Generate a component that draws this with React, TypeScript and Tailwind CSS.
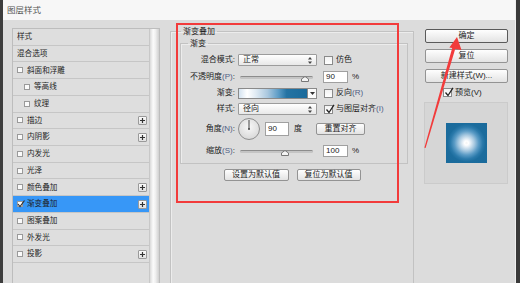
import React from "react";

const FONT = "font-['Liberation_Sans','Noto_Sans_CJK_SC',sans-serif]";

function Key({ k }: { k: string }) {
  return <span className="text-[#4f5f86]">{k}</span>;
}

function UpDown() {
  return (
    <svg width="4" height="7" viewBox="0 0 4 7">
      <polygon points="2,0 4,2.6 0,2.6" fill="#444" />
      <polygon points="0,4.4 4,4.4 2,7" fill="#444" />
    </svg>
  );
}

function SmallCheck({ checked = false }: { checked?: boolean }) {
  return (
    <div className="relative w-[6px] h-[6px] border border-[#9a9a9a] bg-[#fbfbfb] shrink-0">
      {checked && (
        <svg className="absolute left-[-1px] top-[-2px]" width="8" height="8" viewBox="0 0 8 8">
          <path d="M1 4 L3 6.5 L7.5 0.5" fill="none" stroke="#333" strokeWidth="1.2" />
        </svg>
      )}
    </div>
  );
}

function Check({ checked = false }: { checked?: boolean }) {
  return (
    <div className="relative w-[9px] h-[9px] border border-[#8a8a8a] bg-[linear-gradient(#f2f2f2,#ffffff)] shrink-0">
      {checked && (
        <svg className="absolute left-[0px] top-[-2px]" width="10" height="10" viewBox="0 0 10 10">
          <path d="M1.5 5.5 L4 8.5 L9 0.8" fill="none" stroke="#222" strokeWidth="1.3" />
        </svg>
      )}
    </div>
  );
}

function Plus() {
  return (
    <div className="w-[9px] h-[9px] border border-[#9a9a9a] rounded-[1px] bg-[linear-gradient(#fafafa,#e2e2e2)] flex items-center justify-center shrink-0">
      <svg width="7" height="7" viewBox="0 0 7 7">
        <path d="M3.5 1 V6 M1 3.5 H6" stroke="#333" strokeWidth="1.2" />
      </svg>
    </div>
  );
}

function Btn({ w, h = 12, children, dark = false }: { w: number; h?: number; children: React.ReactNode; dark?: boolean }) {
  return (
    <div
      style={{ width: w, height: h }}
      className={`flex items-center justify-center rounded-[2px] bg-[linear-gradient(#fefefe,#e3e3e3)] leading-none text-[8px] text-[#222] ${
        dark ? "border border-[#5a5a5a]" : "border border-[#939393]"
      }`}
    >
      {children}
    </div>
  );
}

function SelectBox({ text }: { text: string }) {
  return (
    <div className="ml-[3px] w-[79px] h-[12px] flex items-center justify-between pl-[4px] pr-[4px] border border-[#9c9c9c] rounded-[1px] bg-[linear-gradient(#ffffff,#e8e8e8)]">
      <span className="leading-none">{text}</span>
      <UpDown />
    </div>
  );
}

function Slider({ pos }: { pos: number }) {
  return (
    <div className="relative ml-[3px] w-[79px] h-[12px] flex items-center">
      <div className="ml-[2px] w-[73px] h-[3px] rounded-[2px] bg-[#c4c4c4] border-t border-[#8c8c8c]" />
      <svg className="absolute" style={{ left: pos, top: 5 }} width="8" height="6" viewBox="0 0 8 6">
        <polygon points="4,0.5 7.5,3 7.5,5.5 0.5,5.5 0.5,3" fill="#f4f4f4" stroke="#777" strokeWidth="1" />
      </svg>
    </div>
  );
}

function Input({ v, w = 25, h = 12 }: { v: string; w?: number; h?: number }) {
  return (
    <div style={{ width: w, height: h }} className="border border-[#a0a0a0] bg-white flex items-center pl-[2px] leading-none text-[8px]">
      {v}
    </div>
  );
}

function Label({ children }: { children: React.ReactNode }) {
  return <div className="w-[54px] text-right leading-none whitespace-nowrap">{children}</div>;
}

type Item = { t: string; cb?: boolean; indent?: boolean; plus?: boolean; sel?: boolean; checked?: boolean };

const items: Item[] = [
  { t: "样式" },
  { t: "混合选项" },
  { t: "斜面和浮雕", cb: true },
  { t: "等高线", cb: true, indent: true },
  { t: "纹理", cb: true, indent: true },
  { t: "描边", cb: true, plus: true },
  { t: "内阴影", cb: true, plus: true },
  { t: "内发光", cb: true },
  { t: "光泽", cb: true },
  { t: "颜色叠加", cb: true, plus: true },
  { t: "渐变叠加", cb: true, plus: true, sel: true, checked: true },
  { t: "图案叠加", cb: true },
  { t: "外发光", cb: true },
  { t: "投影", cb: true, plus: true },
];

export default function App() {
  return (
    <div className={`relative w-[520px] h-[283px] overflow-hidden flex bg-[#dcdcdc] text-[8px] text-[#222] ${FONT}`}>
      <div className="w-[3px] bg-[#3d3d3d] shrink-0" />
      <div className="flex-1 flex flex-col min-w-0">
        {/* title bar */}
        <div className="h-[20px] shrink-0 bg-[#f7f7f7] flex items-center pl-[4px] text-[8.5px] text-[#555]">图层样式</div>
        {/* body */}
        <div className="flex-1 flex min-h-0">
          {/* left list */}
          <div className="ml-[9px] mt-[8px] w-[148px] h-[300px] shrink-0 flex border border-[#bdbdbd] bg-[#dedede]">
            <div className="w-[136px] flex flex-col">
              {items.map((it, i) => (
                <div
                  key={i}
                  className={`h-[16.72px] shrink-0 flex items-center border-b border-[#c6c6c6] pr-[2px] ${
                    it.sel ? "bg-[#3797f7]" : ""
                  } ${it.indent ? "pl-[11px]" : "pl-[4px]"}`}
                >
                  {it.cb && <SmallCheck checked={it.checked} />}
                  <span className={`leading-none ${it.cb ? "ml-[4px]" : ""} text-[7.6px] text-[#1e1e1e]`}>{it.t}</span>
                  <div className="flex-1" />
                  {it.plus && <Plus />}
                </div>
              ))}
            </div>
            <div className="w-[10px] bg-[linear-gradient(to_right,#dadada,#fbfbfb_35%,#f0f0f0_60%,#cfcfcf)] border-l border-[#c8c8c8]" />
          </div>

          {/* middle group */}
          <fieldset className="ml-[10px] mt-[6px] w-[244px] h-[300px] shrink-0 border border-[#c2c2c2] shadow-[inset_1px_1px_0_#ececec]">
            <legend className="ml-[10px] px-[2px] leading-[11px] text-[8px]">渐变叠加</legend>
            <fieldset className="mt-[1px] ml-[9px] mr-[5px] border border-[#c2c2c2] shadow-[inset_1px_1px_0_#ececec] pb-[6px]">
              <legend className="ml-[7px] px-[2px] leading-[11px] text-[8px]">渐变</legend>
              {/* row 1 */}
              <div className="mt-[5px] h-[12px] flex items-center">
                <Label>混合模式:</Label>
                <SelectBox text="正常" />
                <div className="ml-[7px]"><Check /></div>
                <span className="ml-[3px] leading-none">仿色</span>
              </div>
              {/* row 2 */}
              <div className="mt-[5px] h-[12px] flex items-center">
                <Label>
                  不透明度<Key k="(P)" />:
                </Label>
                <Slider pos={63} />
                <div className="ml-[6px]"><Input v="90" /></div>
                <span className="ml-[4px] leading-none">%</span>
              </div>
              {/* row 3 */}
              <div className="mt-[4px] h-[12px] flex items-center">
                <Label>渐变:</Label>
                <div className="ml-[3px] w-[79px] h-[11px] flex border border-[#8a8a8a]">
                  <div className="flex-1 bg-[linear-gradient(to_right,#d4e3f0,#ffffff_12%,#dfeaf3_25%,#aac8df_42%,#5c9cc6_58%,#2473a3_70%,#1a6a9b)]" />
                  <div className="w-[9px] bg-[#fafafa] border-l border-[#8a8a8a] flex items-center justify-center">
                    <svg width="5" height="3" viewBox="0 0 5 3">
                      <polygon points="0,0 5,0 2.5,3" fill="#333" />
                    </svg>
                  </div>
                </div>
                <div className="ml-[7px]"><Check /></div>
                <span className="ml-[3px] leading-none">
                  反向<Key k="(R)" />
                </span>
              </div>
              {/* row 4 */}
              <div className="mt-[4px] h-[12px] flex items-center">
                <Label>样式:</Label>
                <SelectBox text="径向" />
                <div className="ml-[7px]"><Check checked /></div>
                <span className="ml-[3px] leading-none">
                  与图层对齐<Key k="(I)" />
                </span>
              </div>
              {/* row 5 */}
              <div className="mt-[3px] h-[22px] flex items-center">
                <Label>
                  角度<Key k="(N)" />:
                </Label>
                <svg className="ml-[3px]" width="22" height="22" viewBox="0 0 22 22">
                  <defs>
                    <radialGradient id="dial" cx="50%" cy="40%" r="60%">
                      <stop offset="0%" stopColor="#f8f8f8" />
                      <stop offset="100%" stopColor="#d8d8d8" />
                    </radialGradient>
                  </defs>
                  <circle cx="11" cy="11" r="10.5" fill="url(#dial)" stroke="#8e8e8e" strokeWidth="1" />
                  <line x1="11" y1="11" x2="11" y2="2" stroke="#444" strokeWidth="1" />
                  <circle cx="11" cy="11" r="1" fill="#444" />
                </svg>
                <div className="ml-[5px]"><Input v="90" w={24} h={14} /></div>
                <span className="ml-[5px] leading-none">度</span>
                <div className="ml-[14px]"><Btn w={49}>重置对齐</Btn></div>
              </div>
              {/* row 6 */}
              <div className="mt-[5px] h-[12px] flex items-center">
                <Label>
                  缩放<Key k="(S)" />:
                </Label>
                <Slider pos={43} />
                <div className="ml-[6px]"><Input v="100" /></div>
                <span className="ml-[4px] leading-none">%</span>
              </div>
            </fieldset>
            <div className="mt-[5px] flex justify-center gap-[8px]">
              <Btn w={65}>设置为默认值</Btn>
              <Btn w={64}>复位为默认值</Btn>
            </div>
          </fieldset>

          {/* right column */}
          <div className="ml-[11px] mt-[9px] w-[83px] shrink-0 flex flex-col">
            <Btn w={83} h={14} dark>确定</Btn>
            <div className="mt-[6px]"><Btn w={83} h={14}>复位</Btn></div>
            <div className="mt-[6px]"><Btn w={83} h={14}>新建样式(W)...</Btn></div>
            <div className="mt-[5px] pl-[18px] flex items-center h-[9px]">
              <Check checked />
              <span className="ml-[3px] leading-none">预览(V)</span>
            </div>
            <div className="mt-[5px] -ml-px w-[84px] h-[82px] bg-[#d6d6d6] border border-[#cbcbcb] flex items-center justify-center">
              <div className="w-[41px] h-[40px] bg-[radial-gradient(circle_at_center,#f4f4f4_0px,#ffffff_2px,#e4eef6_4px,#a6c8e0_8px,#5c9cc6_12px,#2b7aab_16px,#1b6c9d_19px,#1a6a9b_30px)]" />
            </div>
          </div>
        </div>
      </div>
      <div className="w-[5px] shrink-0 bg-[#3a3a3a] border-l border-[#efefef]" />

      {/* red annotation box */}
      <div className="absolute left-[176px] top-[23px] w-[223px] h-[180px] border-2 border-[#f23b3b] pointer-events-none" />
      {/* red arrow */}
      <svg className="absolute left-0 top-0 pointer-events-none" width="520" height="283" viewBox="0 0 520 283">
        <polygon
          points="457,37 461.5,50 455.2,48.9 425.6,148 424.4,147.7 452.2,48.1 449.4,47.4"
          fill="#f23b3b"
        />
      </svg>
    </div>
  );
}
